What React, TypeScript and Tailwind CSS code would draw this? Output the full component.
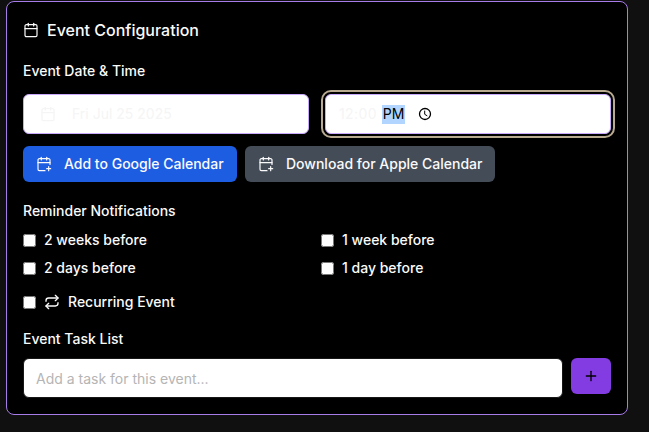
import React from "react";
import { Calendar, CalendarPlus, Plus, Repeat } from "lucide-react";

function Check({ label }: { label: string }) {
  return (
    <label className="flex h-5 items-center gap-2">
      <input type="checkbox" className="h-[13px] w-[13px] shrink-0" />
      <span>{label}</span>
    </label>
  );
}

export default function App() {
  return (
    <div className="h-[432px] w-[649px] overflow-hidden bg-[#101010] pt-px pl-1.5 font-['Inter',sans-serif] text-sm font-medium text-[#fafafa] antialiased">
      <section className="h-[414px] w-[622px] rounded-lg border border-[#a77be8] bg-black px-4 pt-4">
        <h2 className="flex h-6 items-center gap-2 text-base">
          <Calendar size={16} strokeWidth={1.8} />
          Event Configuration
        </h2>
        <h3 className="mt-[19px] h-5 leading-5">Event Date &amp; Time</h3>
        <div className="mt-[13px] grid grid-cols-2 gap-4">
          <button className="flex h-10 items-center gap-4 rounded-md border border-[#c8a8fa] bg-white px-4 font-normal text-[#f5f5f5]">
            <Calendar size={16} />
            Fri Jul 25 2025
          </button>
          <div className="flex h-10 items-center rounded-md border border-[#c8a8fa] bg-white px-[13px] font-normal text-[#f5f5f5] outline-2 outline-offset-2 outline-[#b9aa92]">
            <span className="w-[43px] tracking-[0.4px]">12:00</span>
            <span className="flex h-[19px] w-[23px] items-center justify-center bg-[#b1d5ff] text-black">PM</span>
            <svg className="ml-[13px] text-black" width="14" height="14" viewBox="0 0 14 14" fill="none" stroke="currentColor">
              <circle cx="7" cy="7" r="5.5" strokeWidth="1.3" />
              <path d="M6.7 3.6v3.7l2.6 1.6" strokeWidth="1" />
            </svg>
          </div>
        </div>
        <div className="mt-3 flex gap-2">
          <button className="flex h-9 w-[214px] items-center gap-3 rounded-md bg-[#1d5de2] pl-[13px]">
            <CalendarPlus size={16} strokeWidth={1.8} />
            Add to Google Calendar
          </button>
          <button className="flex h-9 w-[250px] items-center gap-3 rounded-md bg-[#444c58] pl-[13px]">
            <CalendarPlus size={16} strokeWidth={1.8} />
            Download for Apple Calendar
          </button>
        </div>
        <h3 className="mt-[19px] h-5 leading-5">Reminder Notifications</h3>
        <div className="mt-[9px] grid grid-cols-[290px_290px] gap-x-2 gap-y-2">
          <Check label="2 weeks before" />
          <Check label="1 week before" />
          <Check label="2 days before" />
          <Check label="1 day before" />
        </div>
        <label className="mt-3.5 flex h-5 items-center gap-2">
          <input type="checkbox" className="h-[13px] w-[13px] shrink-0" />
          <Repeat size={16} />
          <span>Recurring Event</span>
        </label>
        <h3 className="mt-[17px] h-5 leading-5">Event Task List</h3>
        <div className="mt-[9px] flex items-start gap-2">
          <input
            className="h-10 min-w-0 flex-1 rounded-md border border-[#171717] bg-white px-3 font-normal text-black placeholder:text-[#b5b5b5]"
            placeholder="Add a task for this event..."
          />
          <button className="flex h-9 w-10 items-center justify-center rounded-md bg-[#833ce1] text-black">
            <Plus size={16} />
          </button>
        </div>
      </section>
    </div>
  );
}
